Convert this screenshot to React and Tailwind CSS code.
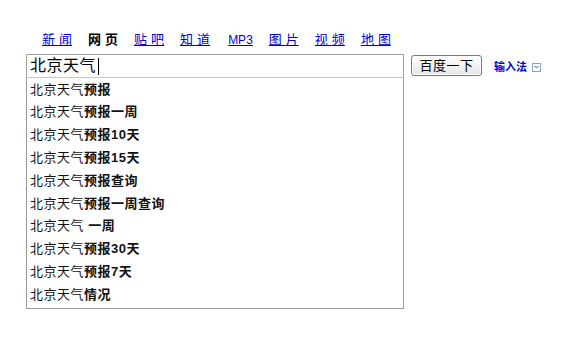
import React from 'react';

const navItems = [
    { label: '新闻' },
    { label: '网页', active: true },
    { label: '贴吧' },
    { label: '知道' },
    { label: 'MP3', latin: true },
    { label: '图片' },
    { label: '视频' },
    { label: '地图' },
];

// matched prefix + bold suffix
const suggestions = [
    '预报',
    '预报一周',
    '预报10天',
    '预报15天',
    '预报查询',
    '预报一周查询',
    ' 一周',
    '预报30天',
    '预报7天',
    '情况',
];

const font = { fontFamily: '"Liberation Sans", "Noto Sans CJK SC", sans-serif' };

function NavLabel({ text }) {
    // spacing only between the two characters, so the underline stops at the last glyph
    return (
        <>
            <span className="tracking-[4px]">{text.slice(0, -1)}</span>
            {text.slice(-1)}
        </>
    );
}

export default function App() {
    return (
        <div className="w-[563px] h-[341px] bg-white" style={font}>
            <div className="pt-[31px] pl-[26px]">
                {/* Nav */}
                <div className="flex items-center h-[18px] pl-[16px] gap-[16px] text-[13px]">
                    {navItems.map((item) =>
                        item.active ? (
                            <span key={item.label} className="font-bold text-black">
                                <NavLabel text={item.label} />
                            </span>
                        ) : (
                            <a
                                key={item.label}
                                href="#"
                                className={`text-[#0000cc] underline ${item.latin ? 'text-[12px] ml-[2px]' : ''}`}
                            >
                                {item.latin ? item.label : <NavLabel text={item.label} />}
                            </a>
                        )
                    )}
                </div>

                {/* Search row */}
                <div className="flex items-start mt-[5px]">
                    <div className="w-[378px]">
                        <div className="h-[24px] border border-[#a0a0a0] border-b-[#c8c8c8] flex items-center pl-[3px] text-[16px] text-black tracking-[0.5px]">
                            北京天气<span className="w-px h-[17px] bg-black ml-[2px]" />
                        </div>
                        <div className="border border-t-0 border-[#999] border-r-[#a0a0a0] pb-[2px]">
                            {suggestions.map((s, i) => (
                                <div key={i} className="h-[22.8px] flex items-center pl-[3px] text-[13px] text-[#111] whitespace-pre tracking-[0.5px]">
                                    北京天气<span className="font-bold">{s}</span>
                                </div>
                            ))}
                        </div>
                    </div>

                    <button className="ml-[7px] mt-[1px] w-[71px] h-[21px] rounded-[3px] border border-[#6b7b9c] bg-gradient-to-b from-white to-[#e6e6e6] text-[13px] text-black leading-none tracking-[0.5px] shadow-[inset_0_0_0_1px_#fff]">
                        百度一下
                    </button>

                    <div className="ml-[12px] mt-[5px] flex items-center gap-[5px]">
                        <span className="text-[11px] text-[#0000cc] font-bold">输入法</span>
                        <span className="w-[9px] h-[9px] border border-[#8aa0c8] flex items-center justify-center">
                            <svg width="5" height="4" viewBox="0 0 5 4">
                                <path d="M0.5 0.8 L2.5 3 L4.5 0.8" stroke="#3060a0" strokeWidth="1" fill="none" />
                            </svg>
                        </span>
                    </div>
                </div>
            </div>
        </div>
    );
}
